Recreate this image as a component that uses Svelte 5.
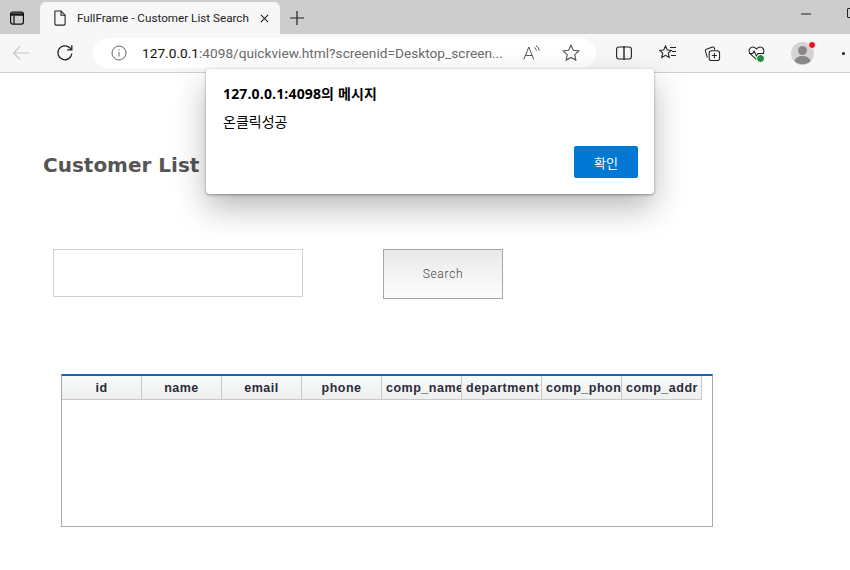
<script>
    const columns = ['id', 'name', 'email', 'phone', 'comp_name', 'department', 'comp_phone', 'comp_addr'];
</script>

<div class="window">
    <div class="tabstrip">
        <div class="tab-menu">
            <svg width="16" height="16" viewBox="0 0 16 16" fill="none" stroke="#111" stroke-width="1.2"><rect x="1.600" y="2.100" width="12.800" height="12" rx="2"/><path d="M1.600 4.500h12.800" stroke-width="2.400"/><path d="M5 5.500v8.600"/></svg>
        </div>
        <div class="tab">
            <svg class="doc" width="14" height="16" viewBox="0 0 14 16" fill="none" stroke="#222" stroke-width="1.100"><path d="M2.100 1h6l4 4.200v8.600a1.300 1.300 0 0 1-1.300 1.300H3.200a1.300 1.300 0 0 1-1.300-1.300V2.200A1.200 1.200 0 0 1 2.100 1z"/><path d="M8 1v4.200h4.200"/></svg>
            <span class="tab-title">FullFrame - Customer List Search</span>
            <svg class="tab-close" width="9" height="9" viewBox="0 0 10 10" stroke="#222" stroke-width="1.200"><path d="M1 1l8 8M9 1l-8 8"/></svg>
        </div>
        <svg class="new-tab" width="14" height="14" viewBox="0 0 14 14" stroke="#222" stroke-width="1.200"><path d="M7 0v14M0 7h14"/></svg>
        <div class="spacer"></div>
        <svg class="minimize" width="10" height="2" viewBox="0 0 10 2" stroke="#222"><path d="M0 1h10"/></svg>
        <span class="maximize"></span>
    </div>

    <div class="toolbar">
        <svg class="back" width="18" height="16" viewBox="0 0 18 16" fill="none" stroke="#c6c6c6" stroke-width="1.200"><path d="M17 8H1.500M8 1.500L1.500 8 8 14.500"/></svg>
        <svg class="reload" width="18" height="18" viewBox="0 0 18 18" fill="none" stroke="#222" stroke-width="1.300"><path d="M15.800 9.500A7 7 0 1 1 13.500 3.600L15.600 5.600"/><path d="M15.800 1.200v4.600h-4.600"/></svg>
        <div class="address">
            <svg class="info" width="16" height="16" viewBox="0 0 16 16" fill="none" stroke="#666" stroke-width="1"><circle cx="8" cy="8" r="7"/><path d="M8 7v4.500M8 4.400v1.300"/></svg>
            <span class="url"><span class="host">127.0.0.1</span>:4098/quickview.html?screenid=Desktop_screen...</span>
            <svg class="read" width="18" height="16" viewBox="0 0 18 16" fill="none" stroke="#555" stroke-width="1"><path d="M.8 14.500L5.800 2l5 12.500M2.500 10.500h6.600"/><path d="M11 2.500c1.400.6 2.200 1.800 2.400 3.300M13 .8c2 .9 3 2.800 3.200 4.800"/></svg>
            <svg class="star" width="18" height="18" viewBox="0 0 18 18" fill="none" stroke="#555" stroke-width="1.100"><path d="M9 1.200l2.400 5 5.400.7-4 3.800 1 5.400L9 13.500l-4.800 2.600 1-5.400-4-3.800 5.400-.7z"/></svg>
        </div>
        <div class="tools">
            <svg width="16" height="14" viewBox="0 0 16 14" fill="none" stroke="#222" stroke-width="1.100"><rect x=".6" y="1" width="14.800" height="12" rx="2.500"/><path d="M8 0v14" stroke-width="1.400"/></svg>
            <svg width="18" height="16" viewBox="0 0 18 16" fill="none" stroke="#222" stroke-width="1.100"><path d="M6.500 1l1.800 4 4 .4-3 2.800.9 4.300-3.700-2.200-3.700 2.200.9-4.300-3-2.800 4-.4z"/><path d="M11 2.500h6M13 6.500h4M12 10.500h5"/></svg>
            <svg width="17" height="17" viewBox="0 0 18 18" fill="none" stroke="#222" stroke-width="1.100"><path d="M3.500 13L1.500 6.500a1.500 1.500 0 0 1 1-1.900L9 2.200a1.500 1.500 0 0 1 1.900 1l.6 1.800"/><rect x="5.500" y="6" width="11" height="10.500" rx="2.500"/><path d="M11 8.500v5.500M8.300 11.200h5.400"/></svg>
            <span class="health">
                <svg width="17" height="15" viewBox="0 0 18 16" fill="none" stroke="#222" stroke-width="1.100"><path d="M9 14.500L2.500 8.500C-.5 5 2 1 5 1c1.800 0 3 1 4 2.200C10 2 11.200 1 13 1c3 0 5.500 4 2.500 7.500"/><path d="M1 8h4l1.500-2.500L9 11l1.500-3H17"/></svg>
                <i class="ok"></i>
            </span>
            <span class="avatar">
                <svg width="23" height="23" viewBox="0 0 23 23"><circle cx="11.500" cy="11.500" r="11.500" fill="#d6d4d3"/><circle cx="11.500" cy="8.500" r="4.500" fill="#8a8886"/><path d="M3.500 19c1-3.500 4-5 8-5s7 1.500 8 5a11.500 11.500 0 0 1-16 0z" fill="#8a8886"/></svg>
                <i class="dot"></i>
            </span>
            <span class="more"><i></i><i></i></span>
        </div>
    </div>

    <main class="page">
        <h1>Customer List</h1>
        <div class="search">
            <input type="text" aria-label="Search text" />
            <button class="search-btn">Search</button>
        </div>
        <div class="grid">
            <div class="grid-head">
                {#each columns as col}
                    <div class="grid-cell">{col}</div>
                {/each}
            </div>
        </div>
    </main>

    <div class="alert">
        <div class="alert-title">127.0.0.1:4098의 메시지</div>
        <div class="alert-msg">온클릭성공</div>
        <div class="alert-actions">
            <button class="ok-btn">확인</button>
        </div>
    </div>
</div>

<style>
    :global(body) {
        margin: 0;
        background: #fff;
    }

    .window {
        position: relative;
        width: 850px;
        height: 570px;
        overflow: hidden;
        font-family: "Open Sans", "Noto Sans CJK KR", sans-serif;
    }

    .tabstrip {
        display: flex;
        align-items: flex-end;
        height: 34px;
        background: #cdcdcd;
    }

    .tab-menu {
        width: 34px;
        height: 32px;
        display: flex;
        align-items: center;
        justify-content: center;
    }

    .tab {
        display: flex;
        align-items: center;
        width: 240px;
        height: 32px;
        margin-left: 6px;
        padding-left: 13px;
        box-sizing: border-box;
        background: #f7f7f7;
        border-radius: 6px 6px 0 0;
    }

    .tab-title {
        margin-left: 10px;
        font: 11.7px "Roboto", sans-serif;
        color: #222;
        white-space: nowrap;
        width: 180px;
    }

    .tab-close {
        margin-left: 3px;
    }

    .new-tab {
        margin: 0 0 9px 10px;
    }

    .spacer {
        flex: 1;
    }

    .minimize {
        margin: 0 36px 19px 0;
    }

    .maximize {
        flex: none;
        width: 8px;
        height: 8px;
        margin: 0 -7px 16px 0;
        border: 1px solid #222;
        border-radius: 1px;
    }

    .toolbar {
        display: flex;
        align-items: center;
        height: 38px;
        background: #f7f7f7;
        border-bottom: 1px solid #d0d0d0;
    }

    .toolbar svg,
    .tools {
        flex: none;
    }

    .back {
        margin-left: 12px;
    }

    .reload {
        margin-left: 26px;
    }

    .address {
        display: flex;
        flex: none;
        align-items: center;
        width: 503px;
        height: 30px;
        margin-left: 19px;
        box-sizing: border-box;
        padding-left: 18px;
        background: #fff;
        border-radius: 15px;
    }

    .url {
        margin-left: 15px;
        width: 365px;
        font: 13.7px "Roboto", sans-serif;
        color: #6b6b6b;
        white-space: nowrap;
    }

    .host {
        color: #111;
    }

    .read {
        margin-left: 16px;
    }

    .star {
        margin-left: 21px;
    }

    .tools {
        display: flex;
        align-items: center;
        gap: 27px;
        margin-left: 20px;
    }

    .health,
    .avatar {
        position: relative;
        display: flex;
    }

    .ok {
        position: absolute;
        right: 0;
        bottom: -2px;
        width: 7px;
        height: 7px;
        border-radius: 50%;
        background: #2a8a3a;
        border: 1px solid #fff;
    }

    .avatar {
        margin-left: -1px;
    }

    .dot {
        position: absolute;
        right: -2px;
        top: -1px;
        width: 6px;
        height: 6px;
        border-radius: 50%;
        background: #e81123;
        border: 1px solid #f7f7f7;
    }

    .more {
        display: flex;
        gap: 5px;
        margin-left: 1px;
    }

    .more i {
        width: 3px;
        height: 3px;
        border-radius: 50%;
        background: #222;
    }

    .page {
        padding-top: 80px;
    }

    h1 {
        margin: 0 0 0 43px;
        font: bold 20px/24px "DejaVu Sans", Verdana, sans-serif;
        color: #555;
    }

    .search {
        display: flex;
        align-items: flex-start;
        gap: 80px;
        margin: 72px 0 0 53px;
    }

    input {
        width: 250px;
        height: 48px;
        box-sizing: border-box;
        border: 1px solid #d0d0d0;
        background: #fff;
        outline: none;
    }

    .search-btn {
        width: 120px;
        height: 50px;
        padding: 0;
        box-sizing: border-box;
        border: 1px solid #a5a5a5;
        background: linear-gradient(#e9e9e9, #fdfdfd);
        font: 300 12px "Roboto", sans-serif;
        letter-spacing: 0.7px;
        color: #444;
    }

    .grid {
        width: 652px;
        height: 153px;
        margin: 75px 0 0 61px;
        box-sizing: border-box;
        border: 1px solid #aaa;
        border-top: 2px solid #1565b7;
    }

    .grid-head {
        display: flex;
        height: 24px;
        box-sizing: border-box;
        border-bottom: 1px solid #c8c8c8;
        width: 640px;
        background: linear-gradient(#f8f9f9, #eef0f0);
    }

    .grid-cell {
        flex: 0 0 80px;
        box-sizing: border-box;
        padding: 0 4px;
        border-right: 1px solid #c8c8c8;
        overflow: hidden;
        white-space: nowrap;
        text-align: center;
        font: bold 12.5px/24px "Liberation Sans", Arial, sans-serif;
        letter-spacing: 0.5px;
        color: #2b2b3a;
    }

    .alert {
        position: absolute;
        left: 206px;
        top: 69px;
        width: 448px;
        height: 125px;
        box-sizing: border-box;
        padding: 15px 16px 16px 17px;
        background: #fff;
        border-radius: 4px;
        box-shadow: 0 1px 3px rgba(0, 0, 0, 0.35), 0 14px 32px rgba(0, 0, 0, 0.28);
    }

    .alert-title {
        font-size: 14px;
        line-height: 20px;
        font-weight: 700;
        letter-spacing: 0.15px;
        color: #000;
    }

    .alert-msg {
        margin-top: 8px;
        font-size: 14px;
        line-height: 20px;
        color: #000;
    }

    .alert-actions {
        display: flex;
        justify-content: flex-end;
        margin-top: 14px;
    }

    .ok-btn {
        width: 64px;
        height: 32px;
        border: none;
        border-radius: 2px;
        background: #0078d4;
        color: #fff;
        font: 13px "Open Sans", "Noto Sans CJK KR", sans-serif;
    }
</style>
